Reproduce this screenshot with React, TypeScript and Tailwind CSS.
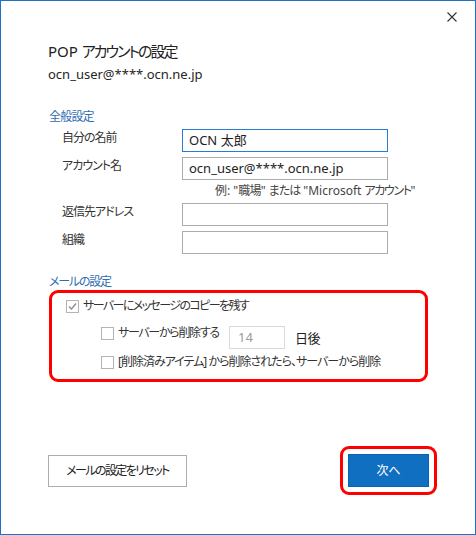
import React from 'react'

const font = "font-['Noto_Sans','Noto_Sans_CJK_JP',sans-serif] [font-feature-settings:'palt']"

function CheckBox({ checked }: { checked?: boolean }) {
  return (
    <span className="w-[13px] h-[13px] border border-[#b4b4b4] bg-white flex items-center justify-center shrink-0">
      {checked && (
        <svg width="9" height="9" viewBox="0 0 9 9">
          <path d="M1 4.5 L3.5 7 L8 1.5" stroke="#8a8a8a" strokeWidth="1.2" fill="none" />
        </svg>
      )}
    </span>
  )
}

function Field({ label, value, focused }: { label: string; value?: string; focused?: boolean }) {
  return (
    <div className="flex items-start">
      <span className="w-[134px] pl-[14px] text-[12px] leading-[18px] tracking-[-1px] text-[#333]">{label}</span>
      <div
        className={`w-[206px] h-[23px] border bg-white pl-[6px] flex items-center text-[13px] text-[#222] ${
          focused ? 'border-[#2a7bd3]' : 'border-[#acacac]'
        }`}
      >
        {value}
      </div>
    </div>
  )
}

export default function App() {
  return (
    <div className={`w-[476px] h-[535px] border border-[#1c73c6] bg-white relative flex flex-col text-[#262626] ${font}`}>
      {/* close */}
      <button className="absolute top-[11px] right-[18px] w-[10px] h-[10px]">
        <svg width="10" height="10" viewBox="0 0 10 10">
          <path d="M0.5 0.5 L9.5 9.5 M9.5 0.5 L0.5 9.5" stroke="#333" strokeWidth="1.1" />
        </svg>
      </button>

      <div className="pl-[47px] pt-[40px]">
        <h1 className="text-[15px] leading-[20px] text-[#222] whitespace-nowrap">
          POP <span className="tracking-[-2px]">アカウントの設定</span>
        </h1>
        <p className="mt-[4px] text-[13px] leading-[18px]">ocn_user@****.ocn.ne.jp</p>

        {/* general */}
        <h2 className="mt-[25px] pl-[1px] text-[12px] leading-[18px] tracking-[-0.8px] text-[#2f6db3]">全般設定</h2>
        <div className="mt-[3px] flex flex-col">
          <Field label="自分の名前" value="OCN 太郎" focused />
          <div className="mt-[5px]">
            <Field label="アカウント名" value="ocn_user@****.ocn.ne.jp" />
          </div>
          <p className="mt-[2px] pl-[167px] text-[12px] leading-[18px] text-[#444] whitespace-nowrap">
            例: "<span className="tracking-[-0.8px]">職場</span>" <span className="tracking-[-1px]">または</span> "Microsoft <span className="tracking-[-1.4px]">アカウント</span>"
          </p>
          <div className="mt-[3px]">
            <Field label="返信先アドレス" />
          </div>
          <div className="mt-[5px]">
            <Field label="組織" />
          </div>
        </div>

        {/* mail */}
        <h2 className="mt-[20px] pl-[1px] text-[12px] leading-[16px] tracking-[-1.2px] text-[#2f6db3]">メールの設定</h2>
        <div className="ml-[1px] w-[379px] border-[3px] border-[#ff0000] rounded-[9px] pt-[4px] pb-[8px] pl-[14px] text-[12px] text-[#333]">
          <div className="h-[18px] flex items-center gap-[4px]">
            <CheckBox checked />
            <span className="leading-[18px] tracking-[-1.6px] whitespace-nowrap">サーバーにメッセージのコピーを残す</span>
          </div>
          <div className="mt-[9px] pl-[35px] flex items-start">
            <div className="h-[18px] w-[128px] shrink-0 flex items-center gap-[4px]">
              <CheckBox />
              <span className="leading-[18px] tracking-[-1.3px] whitespace-nowrap">サーバーから削除する</span>
            </div>
            <div className="mt-[2px] flex items-center">
              <div className="w-[56px] h-[23px] border border-[#dadada] pl-[8px] flex items-center text-[13px] text-[#9a9a9a]">
                14
              </div>
              <span className="ml-[10px] text-[13px] leading-[18px] tracking-[-0.5px] text-[#222]">日後</span>
            </div>
          </div>
          <div className="mt-[4px] pl-[35px] h-[18px] flex items-center gap-[4px]">
            <CheckBox />
            <span className="leading-[18px] tracking-[-1px] whitespace-nowrap">[削除済みアイテム] から削除されたら、サーバーから削除</span>
          </div>
        </div>
      </div>

      {/* buttons */}
      <div className="mt-[64px] pl-[47px] pr-[38px] flex items-center justify-between">
        <button className="w-[139px] h-[32px] border border-[#adadad] bg-white text-[12px] tracking-[-1.6px] text-[#222]">
          メールの設定をリセット
        </button>
        <div className="border-[3px] border-[#ff0000] rounded-[9px] p-[5px]">
          <button className="w-[81px] h-[33px] bg-[#116fc1] border border-[#0b62ad] text-[12px] text-white">
            次へ
          </button>
        </div>
      </div>
    </div>
  )
}
